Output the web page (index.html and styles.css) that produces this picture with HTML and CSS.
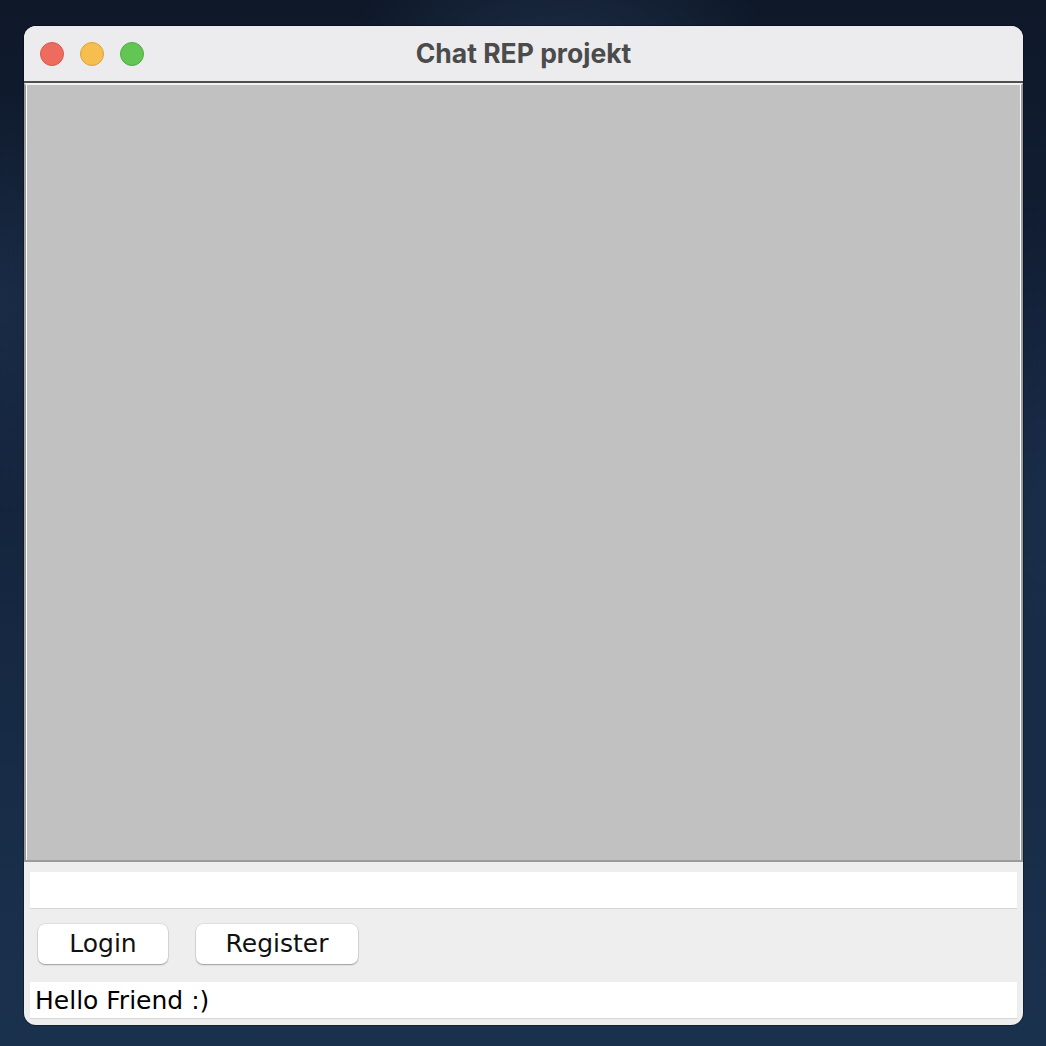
FILE: index.html
```html
<!DOCTYPE html>
<html>
<head>
<meta charset="utf-8">
<title>Chat REP projekt</title>
<link rel="stylesheet" href="styles.css">
</head>
<body>
<div class="desktop">
  <div class="window">
    <div class="titlebar">
      <div class="lights">
        <span class="light red"></span>
        <span class="light yellow"></span>
        <span class="light green"></span>
      </div>
      <div class="title">Chat REP projekt</div>
    </div>
    <div class="chat"></div>
    <div class="bottom">
      <div class="field"></div>
      <div class="buttons">
        <button class="btn login">Login</button>
        <button class="btn register">Register</button>
      </div>
      <div class="status">Hello Friend :)</div>
    </div>
  </div>
</div>
</body>
</html>
```
FILE: styles.css
```css
html, body {
  margin: 0;
  padding: 0;
}
body {
  width: 1046px;
  height: 1046px;
  overflow: hidden;
  font-family: "DejaVu Sans", sans-serif;
}
.desktop {
  width: 1046px;
  height: 1046px;
  box-sizing: border-box;
  padding: 26px 0 0 24px;
  background:
    radial-gradient(ellipse 300px 200px at 560px 60px, rgba(60,90,130,0.3), transparent 70%),
    radial-gradient(ellipse 200px 300px at 0px 300px, rgba(50,80,120,0.25), transparent 70%),
    radial-gradient(ellipse 200px 400px at 1046px 500px, rgba(40,70,110,0.25), transparent 70%),
    linear-gradient(180deg, #0e1829 0%, #13223a 40%, #182c47 75%, #1a314d 100%);
}
.window {
  width: 999px;
  height: 999px;
  border-radius: 12px;
  overflow: hidden;
  background: #eeeeee;
  display: flex;
  flex-direction: column;
  box-shadow: 0 0 0 1px rgba(0,0,0,0.3);
}
.titlebar {
  height: 55px;
  flex: none;
  background: #ececee;
  border-bottom: 2px solid #4e4e4e;
  display: flex;
  align-items: center;
  position: relative;
}
.lights {
  display: flex;
  gap: 16px;
  padding-left: 16px;
  padding-top: 1px;
}
.light {
  width: 24px;
  height: 24px;
  border-radius: 50%;
  box-sizing: border-box;
}
.red { background: #ee6b60; border: 1px solid #d9574d; }
.yellow { background: #f5be4f; border: 1px solid #dba33a; }
.green { background: #62c554; border: 1px solid #50ab43; }
.title {
  position: absolute;
  left: 0;
  right: 0;
  top: 0;
  bottom: 0;
  display: flex;
  align-items: center;
  justify-content: center;
  font-family: Inter, "Liberation Sans", sans-serif;
  font-weight: 700;
  font-size: 26.5px;
  color: #4b4b4b;
  padding-bottom: 1px;
}
.chat {
  height: 779px;
  flex: none;
  box-sizing: border-box;
  background: #c1c1c1;
  border-style: solid;
  border-width: 2px;
  border-color: #f2f2f2 #9a9a9a #9a9a9a #9a9a9a;
  box-shadow: inset 1px 0 0 #ffffff, inset -1px 0 0 #ffffff;
}
.bottom {
  flex: 1;
  padding: 10px 6px 0 6px;
  display: flex;
  flex-direction: column;
}
.field {
  height: 36px;
  background: #ffffff;
  border-bottom: 1px solid #d6d6d6;
}
.buttons {
  display: flex;
  gap: 28px;
  padding: 15px 0 0 8px;
  height: 40px;
}
.btn {
  height: 40px;
  border: none;
  border-radius: 7px;
  background: #ffffff;
  box-shadow: 0 1px 1.5px rgba(0,0,0,0.3), 0 0 0 0.5px rgba(0,0,0,0.12);
  font-family: "DejaVu Sans", sans-serif;
  font-size: 25px;
  color: #111;
  padding: 0 0 2px 0;
  margin: 0;
}
.login { width: 130px; }
.register { width: 162px; }
.status {
  margin-top: 18px;
  height: 36px;
  line-height: 38px;
  background: #ffffff;
  border-bottom: 1px solid #d6d6d6;
  font-size: 25px;
  color: #000;
  padding-left: 5px;
}
```
